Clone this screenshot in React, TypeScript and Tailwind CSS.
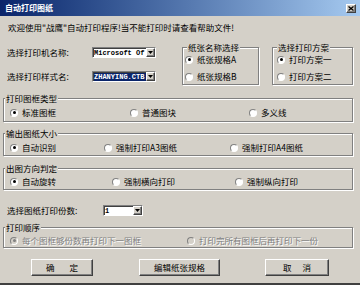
import clsx from "clsx";
import type { ReactNode } from "react";

const raised =
  "border border-t-white border-l-white border-r-[#404040] border-b-[#404040] shadow-[inset_-1px_-1px_0_#808080]";

function Radio({
  label,
  checked,
  disabled,
  className,
}: {
  label: string;
  checked?: boolean;
  disabled?: boolean;
  className?: string;
}) {
  return (
    <div className={clsx("flex h-[11px] items-center gap-[4px]", className)}>
      <span
        className={clsx(
          "flex h-[8px] w-[8px] shrink-0 items-center justify-center rounded-full border border-t-[#808080] border-l-[#808080] border-r-white border-b-white",
          disabled ? "bg-[#d4d0c8]" : "bg-white"
        )}
      >
        {checked && (
          <span
            className={clsx(
              "h-[3px] w-[3px] rounded-full",
              disabled ? "bg-[#808080]" : "bg-black"
            )}
          />
        )}
      </span>
      <span
        className={clsx(
          "whitespace-nowrap leading-[11px]",
          disabled && "text-[#808080] [text-shadow:1px_1px_0_#fff]"
        )}
      >
        {label}
      </span>
    </div>
  );
}

function Group({
  title,
  className,
  titleClass,
  children,
}: {
  title: string;
  className?: string;
  titleClass?: string;
  children: ReactNode;
}) {
  return (
    <div
      className={clsx(
        "relative border border-[#808080] shadow-[inset_1px_1px_0_#fff,1px_1px_0_#fff]",
        className
      )}
    >
      <span
        className={clsx(
          "absolute -top-[7px] bg-[#d4d0c8] px-[1px] leading-[12px] whitespace-nowrap",
          titleClass ?? "left-[1px]"
        )}
      >
        {title}
      </span>
      {children}
    </div>
  );
}

function Combo({
  value,
  selected,
  className,
}: {
  value: string;
  selected?: boolean;
  className?: string;
}) {
  return (
    <div
      className={clsx(
        "flex h-[11px] border border-t-[#808080] border-l-[#808080] border-r-white border-b-white bg-white shadow-[inset_1px_1px_0_#404040]",
        className
      )}
    >
      <div className="flex min-w-0 flex-1 items-center pl-[1px] pt-[1px]">
        <span
          className={clsx(
            "h-full whitespace-nowrap font-['Liberation_Mono',monospace] text-[7px] font-bold leading-[9px]",
            selected ? "w-full bg-[#0a246a] text-white" : "text-black"
          )}
        >
          {value}
        </span>
      </div>
      <div
        className={clsx(
          "flex w-[9px] shrink-0 items-center justify-center bg-[#d4d0c8]",
          raised
        )}
      >
        <svg width="5" height="3" viewBox="0 0 5 3">
          <path d="M0 0h5L2.5 3z" fill="#000" />
        </svg>
      </div>
    </div>
  );
}

function Button({ children, className }: { children: ReactNode; className?: string }) {
  return (
    <button
      className={clsx(
        "flex h-[17px] items-center justify-center bg-[#d4d0c8] leading-[11px]",
        raised,
        className
      )}
    >
      {children}
    </button>
  );
}

export default function App() {
  return (
    <div className="flex h-[285px] w-[360px] flex-col border-b-2 border-b-[#404040] bg-[#d4d0c8] font-['Noto_Sans_CJK_SC',sans-serif] text-[8.5px] text-black">
      {/* 标题栏 */}
      <div className="flex h-[16px] shrink-0 items-center justify-between bg-gradient-to-r from-[#0a246a] to-[#a6caf0] pl-[5px] pr-[4px]">
        <span className="text-[8px] font-bold leading-[10px] text-white">自动打印图纸</span>
        <div className={clsx("flex h-[9px] w-[10px] items-center justify-center bg-[#d4d0c8]", raised)}>
          <svg width="6" height="5" viewBox="0 0 6 5">
            <path d="M0.5 0.5l5 4M5.5 0.5l-5 4" stroke="#000" strokeWidth="1.3" />
          </svg>
        </div>
      </div>

      <div className="mt-[5px] pl-[8px] leading-[12px]">
        欢迎使用"战鹰"自动打印程序!当不能打印时请查看帮助文件!
      </div>

      {/* 打印机 + 方案 */}
      <div className="mt-[14px] flex h-[38px]">
        <div className="flex w-[156px] flex-col pl-[7px]">
          <div className="flex h-[11px] items-center">
            <span className="w-[85px] leading-[11px]">选择打印机名称:</span>
            <Combo value="Microsoft Of" className="w-[64px]" />
          </div>
          <div className="mt-[13px] flex h-[11px] items-center">
            <span className="w-[85px] leading-[11px]">选择打印样式名:</span>
            <Combo value="ZHANYING.CTB" selected className="w-[64px]" />
          </div>
        </div>
        <Group title="纸张名称选择" titleClass="left-[4px]" className="ml-[26px] w-[77px]">
          <div className="flex flex-col gap-[6px] pl-[2px] pt-[6px]">
            <Radio label="纸张规格A" checked />
            <Radio label="纸张规格B" />
          </div>
        </Group>
        <Group title="选择打印方案" titleClass="left-[4px]" className="ml-[13px] w-[81px]">
          <div className="flex flex-col gap-[6px] pl-[4px] pt-[6px]">
            <Radio label="打印方案一" checked />
            <Radio label="打印方案二" />
          </div>
        </Group>
      </div>

      <div className="flex flex-col pl-[3px]">
        <Group title="打印图框类型" className="mt-[13px] h-[24px] w-[350px]">
          <div className="flex pl-[6px] pt-[8px]">
            <Radio label="标准图框" checked className="w-[120px]" />
            <Radio label="普通图块" className="w-[119px]" />
            <Radio label="多义线" />
          </div>
        </Group>

        <Group title="输出图纸大小" className="mt-[11px] h-[23px] w-[350px]">
          <div className="flex pl-[6px] pt-[8px]">
            <Radio label="自动识别" checked className="w-[94px]" />
            <Radio label="强制打印A3图纸" className="w-[126px]" />
            <Radio label="强制打印A4图纸" />
          </div>
        </Group>

        <Group title="出图方向判定" className="mt-[12px] h-[22px] w-[350px]">
          <div className="flex pl-[6px] pt-[7px]">
            <Radio label="自动旋转" checked className="w-[102px]" />
            <Radio label="强制横向打印" className="w-[123px]" />
            <Radio label="强制纵向打印" />
          </div>
        </Group>

        <div className="mt-[15px] flex h-[11px] items-center pl-[4px]">
          <span className="w-[96px] leading-[11px]">选择图纸打印份数:</span>
          <Combo value="1" className="w-[40px]" />
        </div>

        <Group title="打印顺序" className="mt-[11px] h-[21px] w-[350px]">
          <div className="flex pl-[6px] pt-[7px]">
            <Radio label="每个图框够份数再打印下一图框" checked disabled className="w-[177px]" />
            <Radio label="打印完所有图框后再打印下一份" disabled />
          </div>
        </Group>
      </div>

      <div className="mt-[11px] flex pl-[31px]">
        <Button className="w-[62px] gap-[15px]">
          <span>确</span>
          <span>定</span>
        </Button>
        <Button className="ml-[46px] w-[81px]">编辑纸张规格</Button>
        <Button className="ml-[45px] w-[64px] gap-[11px]">
          <span>取</span>
          <span>消</span>
        </Button>
      </div>
    </div>
  );
}
